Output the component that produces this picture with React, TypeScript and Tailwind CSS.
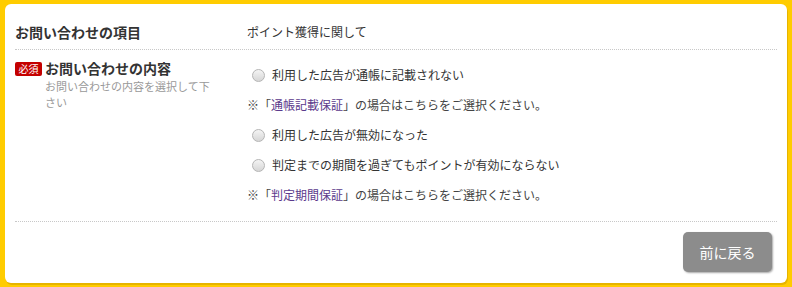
import React from "react";

const font = { fontFamily: '"Noto Sans CJK JP", "Noto Sans", sans-serif' };

function Radio({ label }: { label: string }) {
  return (
    <label className="flex items-center h-[30px] pl-[5px] text-[12px] text-[#333]">
      <span className="w-[13px] h-[13px] rounded-full border border-[#b5b5b5] bg-gradient-to-b from-[#f4f4f4] to-[#d6d6d6] mr-[7px] shrink-0" />
      {label}
    </label>
  );
}

function Note({ link }: { link: string }) {
  return (
    <p className="h-[30px] leading-[30px] text-[12px] text-[#444]">
      ※「<span className="text-[#5b3a8c]">{link}</span>」の場合はこちらをご選択ください。
    </p>
  );
}

export default function App() {
  return (
    <div className="bg-[#ffcc00] w-[792px] h-[287px] pt-[4px] pb-[4px] pl-[5px] pr-[5px]" style={font}>
      <div className="bg-white h-full rounded-[6px] shadow-[1px_2px_0_#e6b400] px-[10px]">
        {/* 項目 */}
        <div className="flex pt-[18px] pb-[7px] border-b border-dotted border-[#c8c8c8]">
          <div className="w-[232px] text-[14px] font-bold leading-[20px] text-[#333]">
            お問い合わせの項目
          </div>
          <div className="text-[12px] leading-[20px] text-[#333]">ポイント獲得に関して</div>
        </div>

        {/* 内容 */}
        <div className="flex border-b border-dotted border-[#c8c8c8]">
          <div className="w-[232px] pt-[8px] flex items-start">
            <span className="mt-[4px] bg-[#c40000] text-white text-[10px] leading-[14px] px-[3.5px] rounded-[2px] mr-[3px] shrink-0">
              必須
            </span>
            <div>
              <p className="text-[14px] font-bold leading-[20px] text-[#333]">お問い合わせの内容</p>
              <p className="w-[170px] text-[11px] leading-[16px] text-[#999]">
                お問い合わせの内容を選択して下さい
              </p>
            </div>
          </div>
          <div className="pt-[10px] pb-[11px]">
            <Radio label="利用した広告が通帳に記載されない" />
            <Note link="通帳記載保証" />
            <Radio label="利用した広告が無効になった" />
            <Radio label="判定までの期間を過ぎてもポイントが有効にならない" />
            <Note link="判定期間保証" />
          </div>
        </div>

        <div className="flex justify-end pt-[10px] pr-[5px]">
          <button className="w-[89px] h-[40px] rounded-[5px] bg-[#8c8c8c] text-white text-[14px] shadow-[1px_1px_2px_rgba(0,0,0,0.35)]">
            前に戻る
          </button>
        </div>
      </div>
    </div>
  );
}
